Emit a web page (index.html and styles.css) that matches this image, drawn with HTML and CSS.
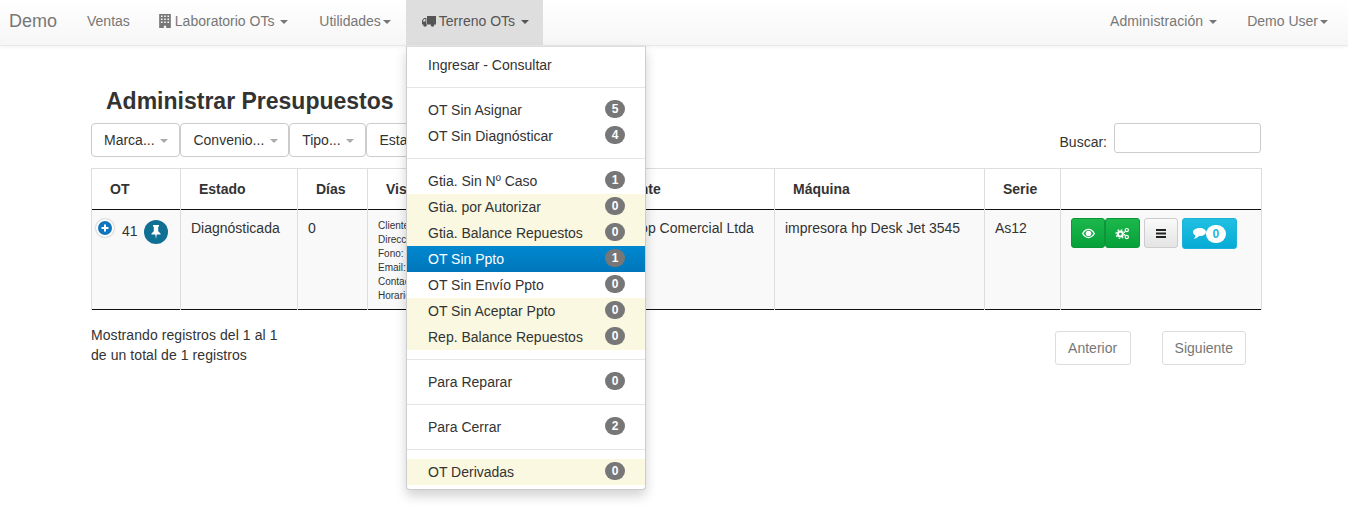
FILE: index.html
```html
<!DOCTYPE html>
<html lang="es">
<head>
<meta charset="utf-8">
<title>Administrar Presupuestos</title>
<link rel="stylesheet" href="styles.css">
</head>
<body>
<nav class="navbar">
  <a class="brand">Demo</a>
  <a class="nav-link">Ventas</a>
  <a class="nav-link nav-lab"><svg class="ico-building" viewBox="0 0 10 12"><path fill="#777" fill-rule="evenodd" d="M0 0h10v12H6v-2H4v2H0zM1.500 1.200v1.400h1.400V1.200zm2.800 0v1.400h1.400V1.200zm2.800 0v1.400h1.400V1.200zM1.500 3.800v1.400h1.400V3.800zm2.800 0v1.400h1.400V3.800zm2.800 0v1.400h1.400V3.800zM1.500 6.400v1.400h1.400V6.400zm2.800 0v1.400h1.400V6.400zm2.800 0v1.400h1.400V6.400z"/></svg>Laboratorio OTs <i class="caret"></i></a>
  <a class="nav-link nav-util">Utilidades<i class="caret caret-tight"></i></a>
  <a class="nav-link nav-open"><svg class="ico-truck" viewBox="0 0 14 11"><path fill="#555" fill-rule="evenodd" d="M5 0h9v8.500H5zM0 4.600 2 2h2.400v6.500H0zM1 4.800v.8h2.400V3.100H2.300z"/><circle cx="3" cy="9" r="1.800" fill="#555"/><circle cx="10.500" cy="9" r="1.800" fill="#555"/></svg>Terreno OTs <i class="caret"></i></a>
  <div class="nav-right">
    <a class="nav-link nav-admin">Administración <i class="caret"></i></a>
    <a class="nav-link nav-user">Demo User<i class="caret caret-tight"></i></a>
  </div>
</nav>

<ul class="dropdown">
  <li class="item first">Ingresar - Consultar</li>
  <li class="divider"></li>
  <li class="item">OT Sin Asignar<span class="badge">5</span></li>
  <li class="item">OT Sin Diagnósticar<span class="badge">4</span></li>
  <li class="divider"></li>
  <li class="item">Gtia. Sin Nº Caso<span class="badge">1</span></li>
  <li class="item warn">Gtia. por Autorizar<span class="badge">0</span></li>
  <li class="item warn">Gtia. Balance Repuestos<span class="badge">0</span></li>
  <li class="item active">OT Sin Ppto<span class="badge">1</span></li>
  <li class="item">OT Sin Envío Ppto<span class="badge">0</span></li>
  <li class="item warn">OT Sin Aceptar Ppto<span class="badge">0</span></li>
  <li class="item warn">Rep. Balance Repuestos<span class="badge">0</span></li>
  <li class="divider"></li>
  <li class="item">Para Reparar<span class="badge">0</span></li>
  <li class="divider"></li>
  <li class="item">Para Cerrar<span class="badge">2</span></li>
  <li class="divider"></li>
  <li class="item warn">OT Derivadas<span class="badge">0</span></li>
</ul>

<main class="container">
  <h1 class="title">Administrar Presupuestos</h1>
  <div class="toolbar">
    <div class="filters">
      <button class="filter">Marca... <i class="caret caret-light"></i></button>
      <button class="filter filter-wide">Convenio... <i class="caret caret-light"></i></button>
      <button class="filter">Tipo... <i class="caret caret-light"></i></button>
      <button class="filter">Estado... <i class="caret caret-light"></i></button>
    </div>
    <label class="search"><span class="search-label">Buscar:</span><input class="search-input" type="text"></label>
  </div>
  <table class="table">
    <colgroup>
      <col class="c1"><col class="c2"><col class="c3"><col class="c4"><col class="c5"><col class="c6"><col class="c7"><col class="c8">
    </colgroup>
    <thead>
      <tr><th>OT</th><th>Estado</th><th>Días</th><th>Visita</th><th>Cliente</th><th>Máquina</th><th>Serie</th><th></th></tr>
    </thead>
    <tbody>
      <tr>
        <td class="cell-ot">
          <span class="expand"><svg viewBox="0 0 14 14"><circle cx="7" cy="7" r="7" fill="#0f76bd"/><path d="M3.500 7h7M7 3.500v7" stroke="#fff" stroke-width="2"/></svg></span>
          <span class="ot-num">41</span>
          <span class="pin"><svg viewBox="0 0 12 14"><path fill="#fff" d="M3 0h6v1.200L8.200 2v4.200L10.500 8.500V9.500H6.700L6 14l-.7-4.500H1.500V8.500L3.800 6.200V2L3 1.200z"/></svg></span>
        </td>
        <td>Diagnósticada</td>
        <td>0</td>
        <td class="cell-visit">Cliente<br>Dirección<br>Fono: 2<br>Email:<br>Contacto<br>Horario</td>
        <td class="cell-client">Shop Comercial Ltda</td>
        <td>impresora hp Desk Jet 3545</td>
        <td>As12</td>
        <td class="cell-actions">
          <button class="act green"><svg viewBox="0 0 14 10"><path fill="#fff" fill-rule="evenodd" d="M7 0c3 0 5.500 2 7 5-1.500 3-4 5-7 5S1.500 8 0 5c1.500-3 4-5 7-5zm0 1.200C4.500 1.200 2.800 3 1.600 5 2.800 7 4.500 8.800 7 8.800S11.200 7 12.400 5C11.200 3 9.500 1.200 7 1.200zM7 2a3 3 0 1 1 0 6 3 3 0 0 1 0-6z"/></svg></button><button class="act green second"><svg class="ico-cogs" viewBox="0 0 14 12"><circle cx="5" cy="6.500" r="2.300" fill="none" stroke="#fff" stroke-width="2"/><circle cx="5" cy="6.500" r="4" fill="none" stroke="#fff" stroke-width="1.200" stroke-dasharray="1.500 1.640"/><circle cx="11" cy="2.800" r="1.500" fill="none" stroke="#fff" stroke-width="1.100"/><circle cx="11" cy="9.300" r="1.500" fill="none" stroke="#fff" stroke-width="1.100"/></svg></button>
          <button class="act light"><svg viewBox="0 0 10 9"><path d="M0 1h10M0 4.500h10M0 8h10" stroke="#222" stroke-width="2"/></svg></button>
          <button class="act info"><svg viewBox="0 0 13 11"><path fill="#fff" d="M7 0c3.300 0 6 1.800 6 4s-2.700 4-6 4l-1-.05C4.800 9.300 3 10.500.8 11c.9-1 1.500-2.200 1.600-3.500C.9 6.700 0 5.400 0 4c0-2.200 3-4 7-4z"/></svg><span class="bubble">0</span></button>
        </td>
      </tr>
    </tbody>
  </table>
  <div class="footer">
    <p class="info-text">Mostrando registros del 1 al 1<br>de un total de 1 registros</p>
    <div class="pager"><a class="page page-prev">Anterior</a><a class="page">Siguiente</a></div>
  </div>
</main>
</body>
</html>
```

FILE: styles.css
```css
* { box-sizing: border-box; }
html, body { margin: 0; height: 514px; overflow: hidden; background: #fff; }
body { font-family: "Liberation Sans", Arial, sans-serif; font-size: 14px; line-height: 20px; color: #333; position: relative; }

.navbar { display: flex; height: 46px; background: linear-gradient(to bottom, #fff, #f6f6f6); border-bottom: 1px solid #e8e8e8; box-shadow: 0 1px 4px rgba(0,0,0,.06); align-items: stretch; color: #777; }
.brand { font-size: 18px; padding: 11px 0 0 9px; width: 72px; color: #777; }
.nav-link { padding: 11px 15px 0; display: block; color: #777; white-space: nowrap; }
.nav-lab { padding-left: 14px; padding-right: 16px; }
.nav-open { background: #dedede; color: #555; width: 137px; padding-left: 16px; }
.nav-right { margin-left: auto; display: flex; }
.nav-admin { letter-spacing: .1px; }
.nav-user { padding-right: 20px; padding-left: 15px; }
.caret { display: inline-block; width: 0; height: 0; margin-left: 2px; vertical-align: middle; border-top: 4px solid; border-left: 4px solid transparent; border-right: 4px solid transparent; }
.caret-tight { margin-left: 2px; }
.caret-light { color: #aaa; }
.ico-building { width: 12px; height: 14px; margin-right: 4px; vertical-align: -2px; }
.ico-truck { width: 14px; height: 11px; margin-right: 3px; vertical-align: -1px; }

.dropdown { position: absolute; left: 406px; top: 46px; width: 240px; height: 444px; margin: 0; padding: 5px 0 0; list-style: none; background: #fff; border: 1px solid #ccc; border-top-color: #ddd; border-radius: 0 0 4px 4px; box-shadow: 0 6px 12px rgba(0,0,0,.175); z-index: 5; }
.item { position: relative; height: 26px; padding: 3px 20px 3px 21px; color: #333; white-space: nowrap; }
.warn { background: #faf8e0; }
.active { background: linear-gradient(to bottom, #0088cf, #0076bb); color: #fff; }
.divider { height: 1px; margin: 9px 0; background: #e5e5e5; }
.badge { position: absolute; right: 20px; top: 3px; width: 20px; height: 18px; border-radius: 9px; background: #777; color: #fff; font-size: 12px; font-weight: 700; line-height: 18px; text-align: center; }

.container { width: 1170px; margin-left: 91px; }
.title { margin: 0; padding: 41px 0 0 15px; height: 77px; font-size: 23px; line-height: 28px; font-weight: 700; color: #333; }
.toolbar { display: flex; justify-content: space-between; align-items: flex-start; height: 45px; }
.filters { display: flex; }
.filter { height: 34px; padding: 6px 11px 6px 12px; font: 14px/20px "Liberation Sans", Arial, sans-serif; color: #333; background: #fff; border: 1px solid #ccc; border-radius: 4px; white-space: nowrap; }
.filter-wide { padding-right: 10px; }
.search { display: flex; align-items: flex-end; gap: 7px; height: 30px; }
.search-label { margin-bottom: 1px; }
.search-input { width: 147px; height: 30px; border: 1px solid #ccc; border-radius: 3px; margin: 0; }

.table { width: 1170px; table-layout: fixed; border-collapse: collapse; }
.c1 { width: 89px; } .c2 { width: 117px; } .c3 { width: 70px; } .c4 { width: 228px; } .c5 { width: 179px; } .c6 { width: 210px; } .c7 { width: 76px; } .c8 { width: 201px; }
.table th { height: 41px; padding: 0 18px; text-align: left; font-weight: 700; border: 1px solid #ddd; border-bottom: 0; white-space: nowrap; overflow: hidden; }
.table tbody tr { background: #f9f9f9; border-top: 1px solid #111; border-bottom: 1px solid #111; }
.table td { height: 100px; padding: 8px 10px; vertical-align: top; border-left: 1px solid #ddd; border-right: 1px solid #ddd; white-space: nowrap; overflow: hidden; }
.cell-visit { font-size: 10px; line-height: 14px; }
.table td.cell-visit { padding-top: 9px; padding-bottom: 0; }
.table td.cell-client { padding-left: 27px; }
.cell-ot { position: relative; }
.expand { position: absolute; left: 4px; top: 9px; width: 18px; height: 18px; border-radius: 50%; background: #fff; padding: 2px; box-shadow: 0 0 2px rgba(0,0,0,.4); display: block; }
.expand svg { display: block; width: 14px; height: 14px; }
.ot-num { position: absolute; left: 30px; top: 11px; }
.pin { position: absolute; left: 52px; top: 10px; width: 24px; height: 24px; border-radius: 50%; background: #0f7094; display: flex; align-items: center; justify-content: center; }
.pin svg { width: 12px; height: 14px; }

.act { height: 30px; padding: 0; vertical-align: top; border-radius: 3px; display: inline-flex; align-items: center; justify-content: center; }
.green { width: 34px; background: linear-gradient(to bottom, #1cb84c, #06a03a); border: 1px solid #0b9638; }
.green.second { width: 35px; }
.green svg { width: 13px; height: 11px; }
.green svg.ico-cogs { width: 15px; height: 13px; }
.light { width: 34px; background: linear-gradient(to bottom, #fafafa, #e4e4e4); border: 1px solid #ccc; }
.light svg { width: 10px; height: 9px; }
.info { width: 55px; height: 31px; background: linear-gradient(to bottom, #22bfe3, #06abd5); border: 1px solid #1db3d8; }
.info svg { width: 13px; height: 11px; }
.bubble { width: 20px; height: 18px; border-radius: 9px; background: #fff; color: #22b5dc; font-size: 12px; font-weight: 700; line-height: 18px; text-align: center; }

.footer { display: flex; justify-content: space-between; padding-top: 15px; }
.info-text { margin: 0; letter-spacing: .07px; }
.pager { display: flex; gap: 31px; padding: 6px 15px 0 0; }
.page { height: 34px; padding: 6px 12px; border: 1px solid #ddd; border-radius: 3px; color: #777; background: #fff; }
.page-prev { padding: 6px 12.5px; }
```
